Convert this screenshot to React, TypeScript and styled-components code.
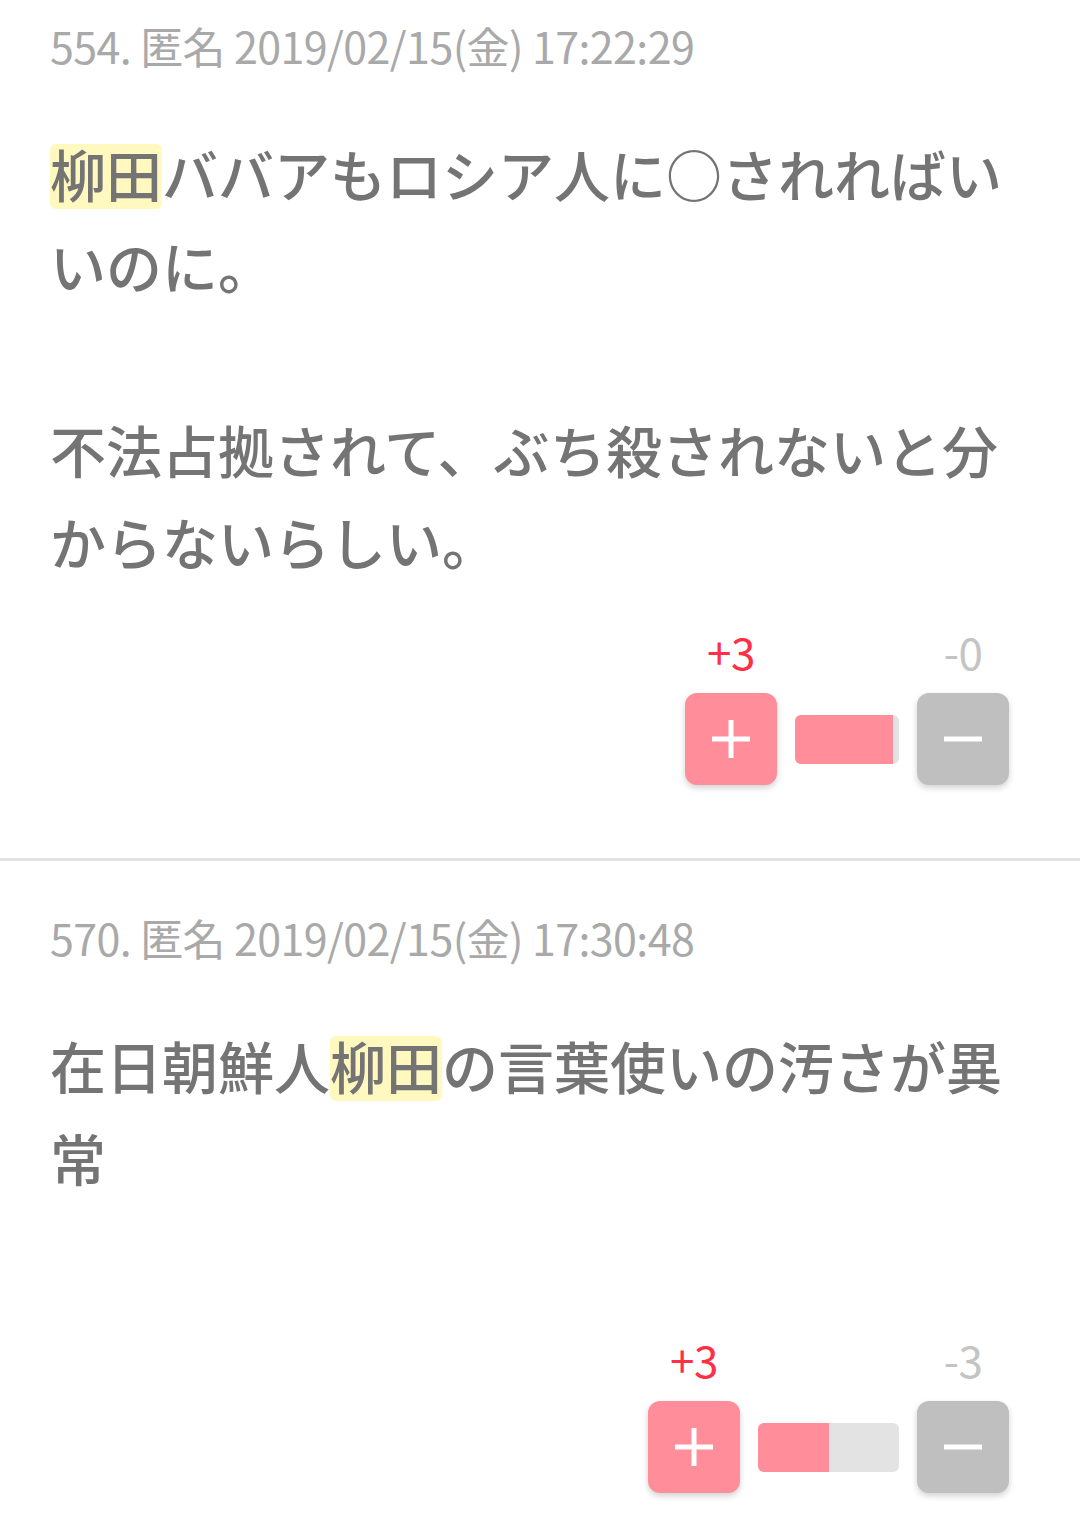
import React from 'react';
import styled, { createGlobalStyle } from 'styled-components';

type Post = {
  id: number;
  date: string;
  lines: React.ReactNode;
  up: number;
  down: number;
  barWidth: number;
  fill: number;
};

const GlobalStyle = createGlobalStyle`
  html, body {
    margin: 0;
    padding: 0;
    background: #ffffff;
  }
  body {
    font-family: "Noto Sans CJK JP", "Noto Sans", sans-serif;
  }
`;

const Mark = styled.span`
  display: inline-block;
  line-height: 58px;
  padding-bottom: 7px;
  background-color: #fff8bf;
  border-radius: 6px;
`;

const posts: Post[] = [
  {
    id: 554,
    date: '2019/02/15(金) 17:22:29',
    lines: (
      <>
        <Mark>柳田</Mark>ババアもロシア人に○されればいいのに。
        <br />
        <br />
        不法占拠されて、ぶち殺されないと分からないらしい。
      </>
    ),
    up: 3,
    down: 0,
    barWidth: 104,
    fill: 94,
  },
  {
    id: 570,
    date: '2019/02/15(金) 17:30:48',
    lines: (
      <>
        在日朝鮮人<Mark>柳田</Mark>の言葉使いの汚さが異常
        <br />
        <br />
      </>
    ),
    up: 3,
    down: 3,
    barWidth: 141,
    fill: 50,
  },
];

const PlusIcon = () => (
  <svg width="38" height="38" viewBox="0 0 38 38">
    <rect x="0" y="16.5" width="38" height="5" fill="#ffffff" />
    <rect x="16.5" y="0" width="5" height="38" fill="#ffffff" />
  </svg>
);

const MinusIcon = () => (
  <svg width="38" height="6" viewBox="0 0 38 6">
    <rect x="0" y="0.5" width="38" height="5" fill="#ffffff" />
  </svg>
);

const App = () => {
  return (
    <>
      <GlobalStyle />
      <Feed>
        {posts.map((post) => (
          <Item key={post.id}>
            <Meta>
              {post.id}. 匿名 {post.date}
            </Meta>
            <Body>{post.lines}</Body>
            <Footer>
              <Votes>
                <Count $kind="up">+{post.up}</Count>
                <Count $kind="down" style={{ gridColumn: 3 }}>
                  -{post.down}
                </Count>
                <VoteButton $kind="up" aria-label="plus">
                  <PlusIcon />
                </VoteButton>
                <Bar style={{ width: post.barWidth }}>
                  <BarFill style={{ width: `${post.fill}%` }} />
                </Bar>
                <VoteButton $kind="down" aria-label="minus">
                  <MinusIcon />
                </VoteButton>
              </Votes>
            </Footer>
          </Item>
        ))}
      </Feed>
    </>
  );
};

const Feed = styled.div`
  margin-top: -31px;
`;

const Item = styled.article`
  padding: 46px 71px 73px 50px;
  border-bottom: 3px solid #e3e3e3;
`;

const Meta = styled.div`
  font-size: 43px;
  letter-spacing: -0.6px;
  line-height: 60px;
  color: #a9a9a9;
  white-space: nowrap;
`;

const Body = styled.p`
  margin: 52px 0 0;
  font-size: 56px;
  font-weight: 500;
  line-height: 92px;
  color: #747474;
`;

const Footer = styled.div`
  display: flex;
  justify-content: flex-end;
  margin-top: 39px;
`;

const Votes = styled.div`
  display: grid;
  grid-template-columns: 92px auto 92px;
  column-gap: 18px;
  row-gap: 17px;
  align-items: center;
`;

const Count = styled.div<{ $kind: 'up' | 'down' }>`
  grid-row: 1;
  text-align: center;
  font-size: 44px;
  letter-spacing: -0.5px;
  line-height: 50px;
  color: ${(p) => (p.$kind === 'up' ? '#ff2f46' : '#c4c4c4')};
`;

const VoteButton = styled.button<{ $kind: 'up' | 'down' }>`
  grid-row: 2;
  width: 92px;
  height: 92px;
  padding: 0;
  border: none;
  border-radius: 12px;
  display: flex;
  align-items: center;
  justify-content: center;
  background-color: ${(p) => (p.$kind === 'up' ? '#ff8d9a' : '#bfbfbf')};
  box-shadow: 0 3px 6px rgba(0, 0, 0, 0.18);
  cursor: pointer;
`;

const Bar = styled.div`
  grid-row: 2;
  height: 49px;
  border-radius: 6px;
  overflow: hidden;
  background-color: #e3e3e3;
`;

const BarFill = styled.div`
  height: 100%;
  background-color: #ff8d9a;
`;

export default App;
